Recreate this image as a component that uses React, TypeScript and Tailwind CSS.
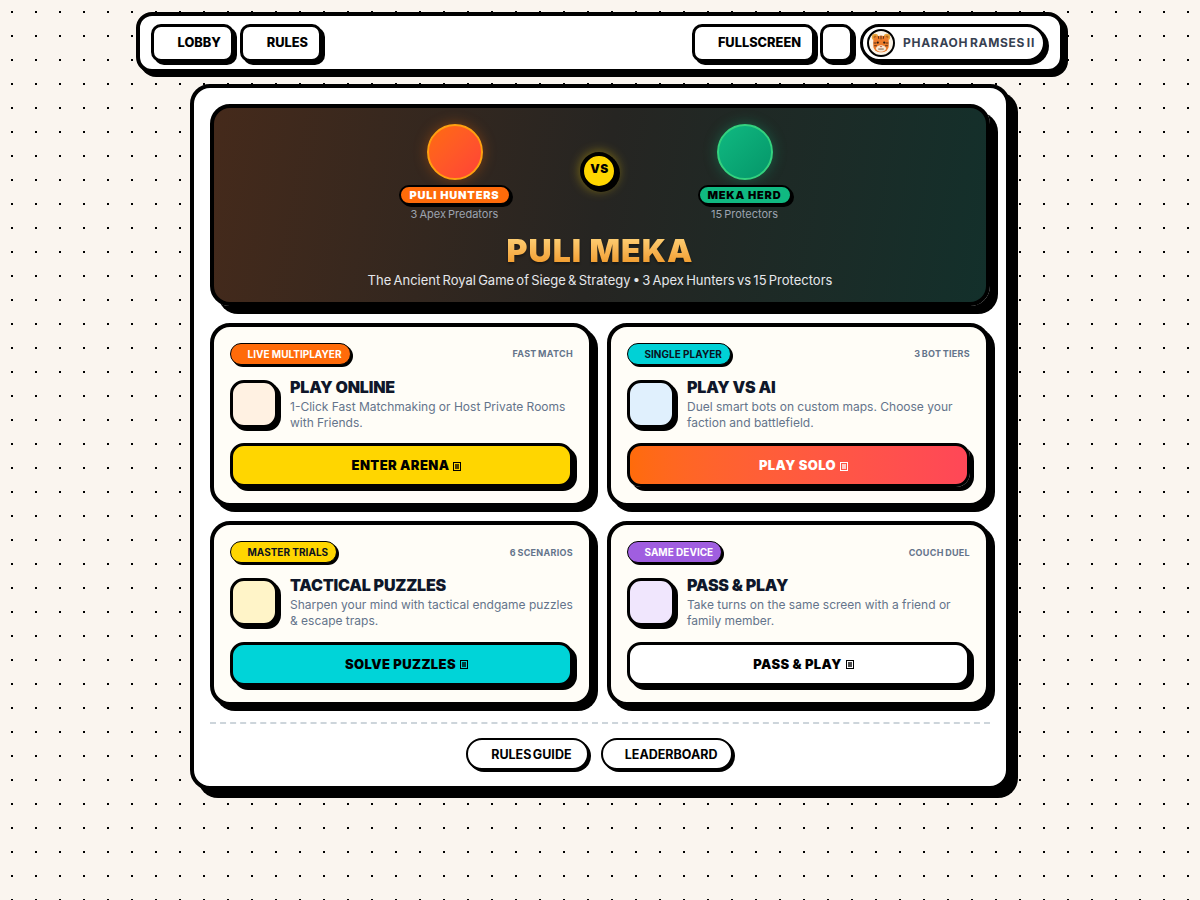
import React from "react";

const Tiger = () => (
  <svg viewBox="0 0 24 24" className="w-[22px] h-[22px]">
    <circle cx="5.5" cy="5.5" r="3.5" fill="#e8a33d" />
    <circle cx="18.5" cy="5.5" r="3.5" fill="#e8a33d" />
    <circle cx="5.5" cy="5.5" r="1.7" fill="#b5651d" />
    <circle cx="18.5" cy="5.5" r="1.7" fill="#b5651d" />
    <rect x="3.5" y="4" width="17" height="18" rx="7" fill="#ee7c2b" />
    <path d="M12 4v4M9 4.5l.6 3M15 4.5l-.6 3M4 12h3M20 12h-3M4.5 15h3M19.5 15h-3" stroke="#4a2a14" strokeWidth="1" />
    <circle cx="8.5" cy="11.5" r="1.2" fill="#2a1a10" />
    <circle cx="15.5" cy="11.5" r="1.2" fill="#2a1a10" />
    <ellipse cx="12" cy="18" rx="5.5" ry="3.6" fill="#f6e6d2" />
    <path d="M10.6 15.2h2.8L12 16.8z" fill="#c0563c" />
    <path d="M9 18.6h6" stroke="#6b4a33" strokeWidth="1" />
  </svg>
);

const cards = [
  {
    chip: "LIVE MULTIPLAYER", chipCls: "bg-[#ff6b0a] text-white", meta: "FAST MATCH", icon: "bg-[#fff1e2]",
    title: "PLAY ONLINE", desc: "1-Click Fast Matchmaking or Host Private Rooms with Friends.",
    btn: "ENTER ARENA", btnCls: "bg-[#ffd600] text-black",
  },
  {
    chip: "SINGLE PLAYER", chipCls: "bg-[#00d1d6] text-[#0b1220]", meta: "3 BOT TIERS", icon: "bg-[#e0f0fd]",
    title: "PLAY VS AI", desc: "Duel smart bots on custom maps. Choose your faction and battlefield.",
    btn: "PLAY SOLO", btnCls: "bg-gradient-to-r from-[#ff6b0a] to-[#ff4757] text-white",
  },
  {
    chip: "MASTER TRIALS", chipCls: "bg-[#ffd600] text-[#0b1220]", meta: "6 SCENARIOS", icon: "bg-[#fff4c8]",
    title: "TACTICAL PUZZLES", desc: "Sharpen your mind with tactical endgame puzzles & escape traps.",
    btn: "SOLVE PUZZLES", btnCls: "bg-[#00d4d8] text-black",
  },
  {
    chip: "SAME DEVICE", chipCls: "bg-[#a05ee0] text-white", meta: "COUCH DUEL", icon: "bg-[#f0e6fd]",
    title: "PASS & PLAY", desc: "Take turns on the same screen with a friend or family member.",
    btn: "PASS & PLAY", btnCls: "bg-white text-black",
  },
];

const TopBtn = ({ label, cls }: { label?: string; cls: string }) => (
  <button className={`h-[38px] border-[3px] border-black rounded-[10px] bg-white shadow-[3px_3px_0_#000] flex items-center justify-end text-[12.8px] font-extrabold text-black ${cls}`}>
    {label}
  </button>
);

export default function App() {
  return (
    <div className="min-h-[900px] bg-[#faf5ef] bg-[radial-gradient(#000_1px,transparent_1px)] bg-[length:24px_24px] font-['Inter',sans-serif] pt-3 flex flex-col items-center">
      <header className="w-[928px] h-[61px] border-4 border-black rounded-[16px] bg-white shadow-[4px_4px_0_#000] flex items-center pl-[11px] pr-[14px]">
        <TopBtn label="LOBBY" cls="w-[83px] pr-[10px]" />
        <TopBtn label="RULES" cls="w-[82px] pr-[11px] ml-[6px]" />
        <div className="flex-1" />
        <TopBtn label="FULLSCREEN" cls="w-[123px] pr-[11px]" />
        <TopBtn cls="w-[33px] ml-[5px]" />
        <div className="h-[38px] w-[186px] ml-[7px] border-[3px] border-black rounded-full bg-white shadow-[3px_3px_0_#000] flex items-center pl-[4px] gap-[8px]">
          <div className="w-[28px] h-[28px] rounded-full border-2 border-black bg-[#fbf3e6] flex items-center justify-center overflow-hidden">
            <Tiger />
          </div>
          <span className="text-[12px] font-bold tracking-[0.7px] [word-spacing:-1.8px] text-[#374151] whitespace-nowrap">PHARAOH RAMSES II</span>
        </div>
      </header>

      <main className="w-[820px] mt-[11px] h-[706px] border-4 border-black rounded-[20px] bg-white shadow-[8px_8px_0_#000] p-4 flex flex-col">
        <section className="h-[202px] shrink-0 border-4 border-black rounded-[20px] shadow-[8px_8px_0_#000] bg-[linear-gradient(100deg,#452a1b_0%,#262522_50%,#13302b_100%)] flex flex-col items-center pt-4">
          <div className="flex items-start justify-center w-full pr-[10px]">
            <div className="w-[112px] flex flex-col items-center">
              <div className="w-14 h-14 rounded-full border-2 border-[#ffa010] bg-gradient-to-br from-[#ff6b0a] to-[#ff4136] shadow-[0_0_14px_rgba(255,107,10,0.35)]" />
              <span className="mt-[5px] h-[20px] w-[112px] flex items-center justify-center rounded-full border-2 border-black bg-[#ff6b0a] text-white text-[11px] font-black tracking-[0.8px] shadow-[2px_2px_0_#000]">PULI HUNTERS</span>
              <span className="mt-[1px] text-[11px] [word-spacing:-1px] text-[#9ca3af]">3 Apex Predators</span>
            </div>
            <div className="ml-[69px] mr-[80px] mt-[28px] w-[38px] h-[38px] shrink-0 rounded-full border-4 border-black bg-[#ffd600] shadow-[2px_2px_0_#000,0_0_12px_rgba(255,214,0,0.45)] flex items-center justify-center text-[12px] font-black tracking-[0.5px] text-black pb-1 pl-[2px]">VS</div>
            <div className="w-[94px] flex flex-col items-center">
              <div className="w-14 h-14 rounded-full border-2 border-[#34d27f] bg-gradient-to-br from-[#10b981] to-[#059669] shadow-[0_0_14px_rgba(16,185,129,0.35)]" />
              <span className="mt-[5px] h-[20px] w-[94px] flex items-center justify-center rounded-full border-2 border-black bg-[#10b981] text-black text-[11px] font-black tracking-[0.8px] shadow-[2px_2px_0_#000]">MEKA HERD</span>
              <span className="mt-[1px] text-[11px] [word-spacing:-1px] text-[#9ca3af]">15 Protectors</span>
            </div>
          </div>
          <h1 className="mt-[9px] text-[32px] leading-[38px] font-black tracking-[1px] bg-gradient-to-b from-[#ffd980] to-[#ee9008] bg-clip-text text-transparent drop-shadow-[0_2px_1px_rgba(0,0,0,0.35)]">PULI MEKA</h1>
          <p className="mt-[1px] text-[13px] [word-spacing:-1.4px] text-[#e5e7eb]">The Ancient Royal Game of Siege &amp; Strategy • 3 Apex Hunters vs 15 Protectors</p>
        </section>

        <div className="grid grid-cols-2 gap-x-[14px] gap-y-[14px] mt-[17px]">
          {cards.map((c) => (
            <article key={c.title} className="h-[184.4px] border-4 border-black rounded-[20px] bg-[#fffdf7] shadow-[5px_5px_0_#000] px-4 pt-4">
              <div className="flex items-center justify-between">
                <span className={`h-[22px] pl-[16.5px] pr-[8px] rounded-full border-[1.5px] border-black shadow-[2px_2px_0_#000] flex items-center text-[10px] font-bold ${c.chipCls}`}>{c.chip}</span>
                <span className="text-[9px] font-bold tracking-[0.3px] [word-spacing:-1px] text-[#64748b]">{c.meta}</span>
              </div>
              <div className="flex gap-[12px] mt-[15px] h-[48px]">
                <div className={`w-12 h-12 shrink-0 rounded-[14px] border-[3px] border-black shadow-[3px_3px_0_#000] ${c.icon}`} />
                <div className="min-w-0">
                  <h2 className="text-[16px] leading-[16px] font-black tracking-[-0.2px] text-[#0f172a] -mt-[1px]">{c.title}</h2>
                  <p className="text-[12px] leading-[16px] text-[#64748b] mt-[4px]">{c.desc}</p>
                </div>
              </div>
              <button className={`mt-[15.4px] w-full h-[44px] border-[3px] border-black rounded-[14px] shadow-[4px_4px_0_#000] flex items-center justify-center gap-[4px] pt-[1px] pl-[10px] text-[13px] font-black tracking-[0.4px] ${c.btnCls}`}>
                {c.btn}
                <span className="relative w-[8px] h-[9px] border-[1.5px] border-current mt-[1px]">
                  <span className="absolute inset-[1px] bg-current opacity-70" />
                </span>
              </button>
            </article>
          ))}
        </div>

        <div className="mt-[16.2px] border-t-2 border-dashed border-[#cdd5db]" />
        <div className="flex justify-center gap-[12px] mt-[14px] pr-[2px]">
          <button className="w-[123px] h-[32px] pr-[15px] pt-[3px] border-2 border-black rounded-full bg-white shadow-[2px_2px_0_#000] flex items-center justify-end text-[12.5px] font-bold text-black [word-spacing:-1.5px]">RULES GUIDE</button>
          <button className="w-[132px] h-[32px] pr-[13px] pt-[3px] border-2 border-black rounded-full bg-white shadow-[2px_2px_0_#000] flex items-center justify-end text-[12.5px] font-bold text-black">LEADERBOARD</button>
        </div>
      </main>
    </div>
  );
}
